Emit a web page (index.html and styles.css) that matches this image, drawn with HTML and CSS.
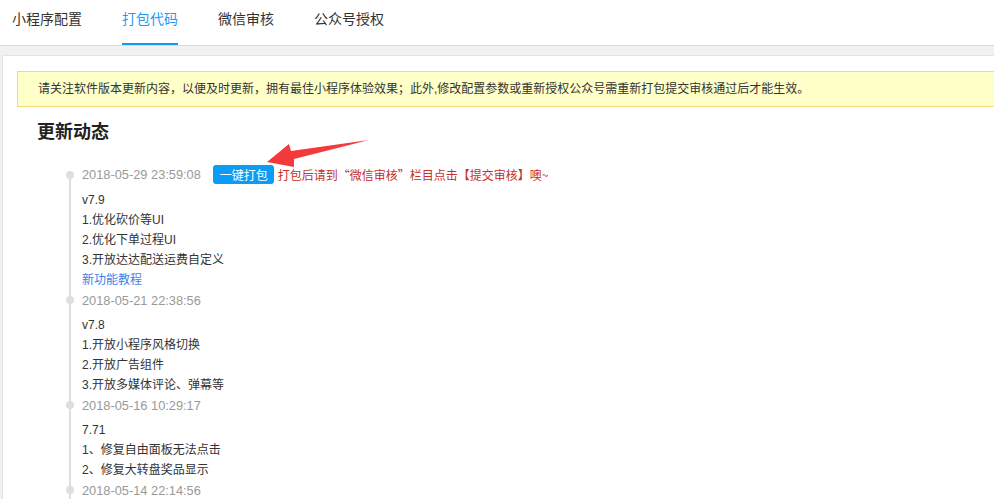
FILE: index.html
```html
<!DOCTYPE html>
<html lang="zh-CN">
<head>
<meta charset="utf-8">
<title>打包代码</title>
<link rel="stylesheet" href="styles.css">
</head>
<body>
<nav class="nav">
  <a class="nav-tab">小程序配置</a>
  <a class="nav-tab nav-tab--active">打包代码</a>
  <a class="nav-tab">微信审核</a>
  <a class="nav-tab">公众号授权</a>
</nav>
<main class="main">
  <section class="panel">
    <div class="notice">请关注软件版本更新内容，以便及时更新，拥有最佳小程序体验效果；此外,修改配置参数或重新授权公众号需重新打包提交审核通过后才能生效。</div>
    <h2 class="title">更新动态</h2>
    <ul class="timeline">
      <li class="entry">
        <div class="date-row date-row--action">
          <span class="date">2018-05-29 23:59:08</span>
          <button class="pack-btn">一键打包</button>
          <span class="hint">打包后请到“微信审核”栏目点击【提交审核】噢~</span>
          <svg class="arrow" width="106" height="32" viewBox="0 0 106 32"><polygon points="2,24 24,6 26,13 104,2 29,21 29,29" fill="#f23a3a"/></svg>
        </div>
        <div class="content">
          <p>v7.9</p>
          <p>1.优化砍价等UI</p>
          <p>2.优化下单过程UI</p>
          <p>3.开放达达配送运费自定义</p>
          <p><a class="link">新功能教程</a></p>
        </div>
      </li>
      <li class="entry">
        <div class="date-row"><span class="date">2018-05-21 22:38:56</span></div>
        <div class="content">
          <p>v7.8</p>
          <p>1.开放小程序风格切换</p>
          <p>2.开放广告组件</p>
          <p>3.开放多媒体评论、弹幕等</p>
        </div>
      </li>
      <li class="entry">
        <div class="date-row"><span class="date">2018-05-16 10:29:17</span></div>
        <div class="content">
          <p>7.71</p>
          <p>1、修复自由面板无法点击</p>
          <p>2、修复大转盘奖品显示</p>
        </div>
      </li>
      <li class="entry">
        <div class="date-row"><span class="date">2018-05-14 22:14:56</span></div>
      </li>
    </ul>
  </section>
</main>
</body>
</html>
```

FILE: styles.css
```css
* { box-sizing: border-box; }
html, body { margin: 0; padding: 0; }
body {
  width: 994px;
  height: 499px;
  overflow: hidden;
  background: #fff;
  font-family: "Liberation Sans", "Noto Sans CJK SC", sans-serif;
  color: #333;
  font-size: 12px;
}
.nav {
  height: 46px;
  display: flex;
  gap: 40px;
  padding-left: 12px;
  border-bottom: 1px solid #dcdcdc;
}
.nav-tab {
  position: relative;
  height: 45px;
  padding-top: 9px;
  line-height: 20px;
  font-size: 14px;
  color: #333;
  text-decoration: none;
}
.nav-tab--active { color: #1c9cf4; }
.nav-tab--active::after {
  content: "";
  position: absolute;
  left: 0;
  right: 0;
  bottom: 0;
  height: 2px;
  background: #0f9bf3;
}
.main {
  background: #f1f1f1;
  padding: 9px 0 0 2px;
}
.panel {
  background: #fff;
  border-top: 1px solid #e4e4e4;
  border-left: 1px solid #e4e4e4;
  padding-top: 15px;
  height: 460px;
}
.notice {
  margin: 0 -20px 0 14px;
  height: 36px;
  line-height: 34px;
  padding-left: 20px;
  background: #ffffc8;
  border: 1px solid #fbd77c;
  color: #333;
  font-size: 12px;
  white-space: nowrap;
}
.title {
  margin: 13px 0 0 34px;
  font-size: 18px;
  line-height: 24px;
  font-weight: bold;
  color: #222;
}
.timeline {
  position: relative;
  list-style: none;
  margin: 20px 0 0 66px;
  padding: 0;
}
.timeline::before {
  content: "";
  position: absolute;
  left: 0;
  top: 10px;
  bottom: -40px;
  width: 2px;
  background: #dedede;
}
.entry { position: relative; }
.date-row {
  position: relative;
  display: flex;
  align-items: center;
  height: 20px;
  padding-left: 13px;
}
.date-row--action { height: 21px; }
.date-row::before {
  content: "";
  position: absolute;
  left: -3px;
  top: 50%;
  margin-top: -4px;
  width: 8px;
  height: 8px;
  border-radius: 50%;
  background: #dedede;
}
.date {
  font-size: 12.8px;
  color: #999;
  white-space: nowrap;
}
.pack-btn {
  margin-left: 12px;
  height: 19px;
  padding: 0 6px 0 7px;
  border: 0;
  border-radius: 3px;
  background: #0d9cf4;
  color: #fff;
  font-family: "Noto Sans CJK SC", sans-serif;
  font-size: 12px;
  line-height: 19px;
}
.hint {
  margin-left: 4px;
  color: #c4302a;
  font-family: "Noto Sans CJK SC", sans-serif;
  font-size: 12px;
  white-space: nowrap;
}
.arrow {
  position: absolute;
  left: 196px;
  top: -26px;
}
.content {
  padding: 5px 0 0 13px;
}
.content p {
  margin: 0;
  line-height: 20px;
  font-size: 12px;
  color: #333;
}
.link {
  color: #3c7fe8;
  text-decoration: none;
}
```
